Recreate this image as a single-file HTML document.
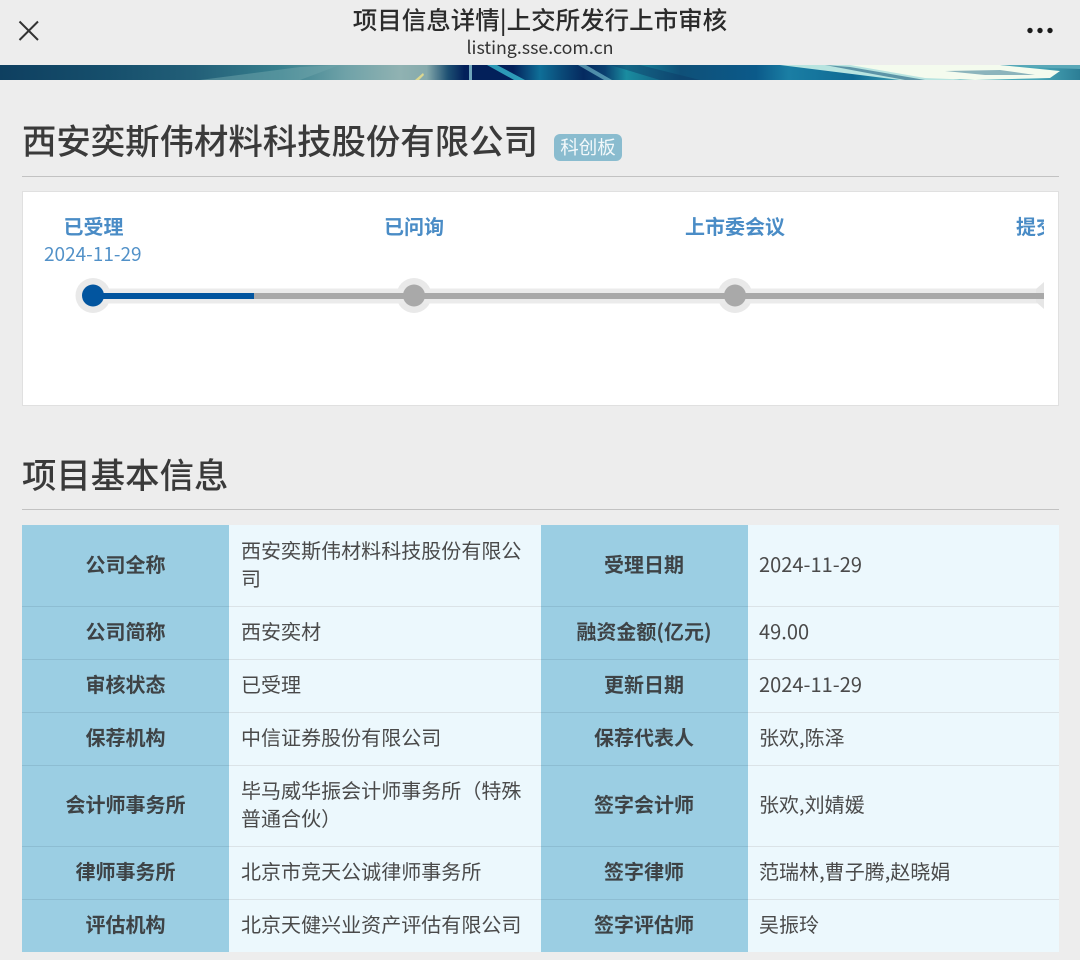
<!DOCTYPE html>
<html lang="zh">
<head>
<meta charset="utf-8">
<title>项目信息详情|上交所发行上市审核</title>
<style>
*{box-sizing:border-box;margin:0;padding:0}
html,body{width:1080px;height:960px;overflow:hidden;background:#ededed}
body{position:relative;font-family:"Liberation Sans","Noto Sans CJK SC",sans-serif;color:#3c3c3c}
.a{position:absolute;white-space:nowrap}
.n{font-family:"Noto Sans CJK SC",sans-serif}
.h{font-size:34.4px;line-height:44px;left:22px;color:#3a3a3a;font-family:"Noto Sans CJK SC",sans-serif;font-weight:500}
.rule{position:absolute;left:22px;width:1037px;height:1px;background:#c2c2c2}
.cell{position:absolute;display:flex;align-items:center;font-size:20px;line-height:28px;font-family:"Noto Sans CJK SC",sans-serif;padding-bottom:4px}
.k{background:#9bcee3;justify-content:center;font-weight:700;color:#3e4346;border-bottom:1px solid #8dbdd2;text-align:center}
.k.r{padding-right:1px}
.v{background:#ecf8fd;padding-left:12px;padding-right:6px;color:#4a4a4a;border-bottom:1px solid #dbe3e7;letter-spacing:.03px}
.v.r{padding-left:11px}
.st{color:#4a8cc6;font-size:20px;line-height:28px;font-weight:700;font-family:"Noto Sans CJK SC",sans-serif}
</style>
</head>
<body>

<div class="a n" style="left:0;width:1080px;top:3px;text-align:center;font-size:24.5px;line-height:34px;color:#2b2b2b;font-weight:500">项目信息详情|上交所发行上市审核</div>
<div class="a n" style="left:0;width:1080px;top:34px;text-align:center;font-size:17.8px;line-height:26px;color:#333">listing.sse.com.cn</div>

<svg class="a" style="left:18px;top:20px" width="22" height="22" viewBox="0 0 22 22"><path d="M1.5 1.5 L20 20 M20 1.5 L1.5 20" stroke="#333" stroke-width="2" fill="none"/></svg>
<svg class="a" style="left:1024px;top:24px" width="32" height="12" viewBox="0 0 32 12"><circle cx="6" cy="6.500" r="2.700" fill="#1c1c1c"/><circle cx="16" cy="6.500" r="2.700" fill="#1c1c1c"/><circle cx="26" cy="6.500" r="2.700" fill="#1c1c1c"/></svg>

<svg class="a" style="left:0;top:65px" width="1080" height="15" viewBox="0 0 1080 15" preserveAspectRatio="none">
<defs>
<linearGradient id="g" x1="0" x2="1" y1="0" y2="0">
<stop offset="0" stop-color="#0e3f60"/>
<stop offset=".1" stop-color="#164f6c"/>
<stop offset=".18" stop-color="#225f78"/>
<stop offset=".26" stop-color="#38808e"/>
<stop offset=".32" stop-color="#6fa2a8"/>
<stop offset=".37" stop-color="#90b2b2"/>
<stop offset=".395" stop-color="#86aaac"/>
<stop offset=".415" stop-color="#1c4f72"/>
<stop offset=".43" stop-color="#03205a"/>
<stop offset=".475" stop-color="#03205a"/>
<stop offset=".5" stop-color="#0f6f98"/>
<stop offset=".52" stop-color="#0a4a78"/>
<stop offset=".54" stop-color="#052a60"/>
<stop offset=".56" stop-color="#0a4070"/>
<stop offset=".58" stop-color="#1a8ca0"/>
<stop offset=".63" stop-color="#0f5078"/>
<stop offset=".7" stop-color="#0b5a8a"/>
<stop offset=".73" stop-color="#1a7ea4"/>
<stop offset=".79" stop-color="#0f6a94"/>
<stop offset=".85" stop-color="#4ab0bc"/>
<stop offset=".96" stop-color="#4aa8b8"/>
<stop offset="1" stop-color="#2c7e96"/>
</linearGradient>
</defs>
<rect width="1080" height="15" fill="url(#g)"/>
<path d="M469 0 L472 0 L472 15 L469 15Z" fill="#6fa6bc"/>
<path d="M487 0 L497 0 L525 15 L514 15Z" fill="#35b0c8" opacity=".85"/>
<path d="M578 0 L586 0 L612 15 L604 15Z" fill="#6cb4c6" opacity=".7"/>
<path d="M415 15 L423 8 L424 10 L419 15Z" fill="#dcd890"/>
<path d="M780 0 L860 0 L960 15 L900 15Z" fill="#b8e4e0"/>
<path d="M850 0 L1000 0 L1060 6 L1050 13 L975 15 L925 13Z" fill="#f4fbee"/>
<path d="M945 6 L1000 5 L1035 10 L985 10Z" fill="#8cb4bc"/>
<path d="M1000 0 L1060 0 L1080 0 L1080 4 L1050 3Z" fill="#5aa8b8"/>
<path d="M825 0 L850 2 L925 15 L905 15Z" fill="#1e5f80" opacity=".6"/>
<path d="M610 0 L640 0 L700 15 L660 15Z" fill="#0d3a66" opacity=".45"/>
<path d="M200 15 L300 2 L340 0 L300 15Z" fill="#6fa6ac" opacity=".5"/>
</svg>

<div class="a h" style="top:117px">西安奕斯伟材料科技股份有限公司</div>
<div class="a n" style="left:554px;top:134px;width:68px;height:27px;background:#8abccf;border-radius:6px;color:#f2f8fa;font-size:18.500px;line-height:26px;text-align:center">科创板</div>
<div class="rule" style="top:176px"></div>

<div class="a" style="left:22px;top:191px;width:1037px;height:215px;background:#fff;border:1px solid #e0e0e0"></div>

<div class="a st" style="left:63.500px;top:212px">已受理</div>
<div class="a n" style="left:44px;top:240px;font-size:19px;line-height:28px;color:#5291c8">2024-11-29</div>
<div class="a st" style="left:384px;top:212px">已问询</div>
<div class="a st" style="left:685px;top:212px">上市委会议</div>
<div class="a" style="left:1016px;top:212px;width:28px;height:30px;overflow:hidden"><span class="st" style="display:block;width:60px">提交</span></div>

<svg class="a" style="left:70px;top:270px" width="974" height="50" viewBox="0 0 974 50">
<circle cx="23" cy="25.500" r="17.500" fill="#e9e9e9"/>
<circle cx="344" cy="25.500" r="17.500" fill="#e9e9e9"/>
<circle cx="665" cy="25.500" r="17.500" fill="#e9e9e9"/>
<rect x="23" y="18.500" width="951" height="15" fill="#ebebeb"/>
<path d="M974 12 V39 L966 32 V19Z" fill="#e6e6e6"/>
<rect x="23" y="23" width="951" height="6" fill="#a9a9a9"/>
<rect x="23" y="23" width="161" height="6" fill="#02559f"/>
<circle cx="23" cy="25.500" r="11" fill="#02559f"/>
<circle cx="344" cy="25.500" r="11" fill="#a9a9a9"/>
<circle cx="665" cy="25.500" r="11" fill="#a9a9a9"/>
</svg>

<div class="a h" style="top:451px">项目基本信息</div>
<div class="rule" style="top:509px"></div>

<div class="cell k" style="left:22px;top:525px;width:207px;height:82px">公司全称</div>
<div class="cell v" style="left:229px;top:525px;width:312px;height:82px;white-space:normal">西安奕斯伟材料科技股份有限公司</div>
<div class="cell k r" style="left:541px;top:525px;width:207px;height:82px">受理日期</div>
<div class="cell v r" style="left:748px;top:525px;width:311px;height:82px">2024-11-29</div>

<div class="cell k" style="left:22px;top:607px;width:207px;height:53px">公司简称</div>
<div class="cell v" style="left:229px;top:607px;width:312px;height:53px">西安奕材</div>
<div class="cell k r" style="left:541px;top:607px;width:207px;height:53px">融资金额(亿元)</div>
<div class="cell v r" style="left:748px;top:607px;width:311px;height:53px">49.00</div>

<div class="cell k" style="left:22px;top:660px;width:207px;height:53px">审核状态</div>
<div class="cell v" style="left:229px;top:660px;width:312px;height:53px">已受理</div>
<div class="cell k r" style="left:541px;top:660px;width:207px;height:53px">更新日期</div>
<div class="cell v r" style="left:748px;top:660px;width:311px;height:53px">2024-11-29</div>

<div class="cell k" style="left:22px;top:713px;width:207px;height:53px">保荐机构</div>
<div class="cell v" style="left:229px;top:713px;width:312px;height:53px">中信证券股份有限公司</div>
<div class="cell k r" style="left:541px;top:713px;width:207px;height:53px">保荐代表人</div>
<div class="cell v r" style="left:748px;top:713px;width:311px;height:53px">张欢,陈泽</div>

<div class="cell k" style="left:22px;top:766px;width:207px;height:81px">会计师事务所</div>
<div class="cell v" style="left:229px;top:766px;width:312px;height:81px">毕马威华振会计师事务所（特殊普通合伙）</div>
<div class="cell k r" style="left:541px;top:766px;width:207px;height:81px">签字会计师</div>
<div class="cell v r" style="left:748px;top:766px;width:311px;height:81px">张欢,刘婧媛</div>

<div class="cell k" style="left:22px;top:847px;width:207px;height:53px">律师事务所</div>
<div class="cell v" style="left:229px;top:847px;width:312px;height:53px">北京市竞天公诚律师事务所</div>
<div class="cell k r" style="left:541px;top:847px;width:207px;height:53px">签字律师</div>
<div class="cell v r" style="left:748px;top:847px;width:311px;height:53px">范瑞林,曹子腾,赵晓娟</div>

<div class="cell k" style="left:22px;top:900px;width:207px;height:52px;border-bottom:0">评估机构</div>
<div class="cell v" style="left:229px;top:900px;width:312px;height:52px;border-bottom:0">北京天健兴业资产评估有限公司</div>
<div class="cell k r" style="left:541px;top:900px;width:207px;height:52px;border-bottom:0">签字评估师</div>
<div class="cell v r" style="left:748px;top:900px;width:311px;height:52px;border-bottom:0">吴振玲</div>

</body>
</html>
